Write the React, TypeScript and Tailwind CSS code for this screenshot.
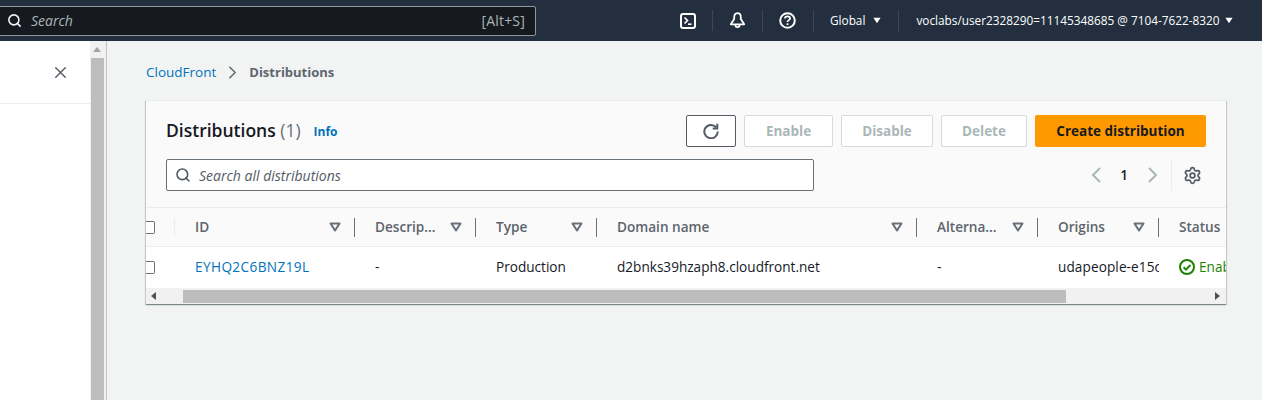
import React from "react";
import { ChevronRight, Search, Settings, X } from "lucide-react";

const font = "font-['Open_Sans','Noto_Sans',sans-serif]";

const Caret = ({ className }: { className: string }) => (
  <svg viewBox="0 0 10 8" className={className}>
    <path d="M0.5 0.5h9L5 7.5z" fill="currentColor" />
  </svg>
);

const SortIcon = () => (
  <svg viewBox="0 0 12 10" className="w-3 h-2.5 shrink-0 text-[#687078]">
    <path d="M1.5 1.5h9L6 8.5z" fill="none" stroke="currentColor" strokeWidth="2" strokeLinejoin="round" />
  </svg>
);

const TerminalIcon = () => (
  <svg viewBox="0 0 16 16" className="w-4 h-4 shrink-0" fill="none" stroke="currentColor" strokeWidth="2">
    <rect x="1" y="1" width="14" height="14" rx="2" />
    <path d="M4.5 4.5L7.5 7.5L4.5 10.5" strokeWidth="1.6" />
    <path d="M8 11.2h3.5" strokeWidth="1.6" />
  </svg>
);

const BellGlyph = () => (
  <svg viewBox="0 0 17 17" className="w-[17px] h-[17px] shrink-0" fill="none" stroke="currentColor" strokeWidth="1.8">
    <path d="M8.5 1.2C6.2 1.2 5.2 3 5.2 5v2L1.8 12.3h13.4L11.8 7V5c0-2-1-3.8-3.3-3.8z" strokeLinejoin="round" />
    <path d="M6.4 13a2.1 2.1 0 0 0 4.2 0" />
  </svg>
);

const HelpIcon = () => (
  <svg viewBox="0 0 17 17" className="w-[17px] h-[17px] shrink-0" fill="none" stroke="currentColor" strokeWidth="2">
    <circle cx="8.5" cy="8.5" r="7.3" />
    <path d="M6 6.6c0-1.5 1.1-2.3 2.5-2.3s2.5.9 2.5 2.1c0 1.7-2.5 1.8-2.5 3.6" strokeWidth="1.8" />
    <path d="M8.5 11.3v1.7" strokeWidth="1.8" />
  </svg>
);

const RefreshIcon = () => (
  <svg viewBox="0 0 16 16" className="w-4 h-4 text-[#545b64]" fill="none" stroke="currentColor" strokeWidth="2">
    <path d="M13.2 4.4A6.7 6.7 0 1 0 14.7 8.5" />
    <path d="M14.3 0.8v4.6H9.7" />
  </svg>
);

const Chevron = ({ dir }: { dir: "left" | "right" }) => (
  <svg viewBox="0 0 10 16" className="w-[10px] h-4 text-[#aab7b8]" fill="none" stroke="currentColor" strokeWidth="2">
    <path d={dir === "left" ? "M9 1L2 8l7 7" : "M1 1l7 7-7 7"} />
  </svg>
);

const HeaderCell = ({ label, width }: { label: string; width: string }) => (
  <div className={`${width} shrink-0 h-full flex items-center pl-5`}>
    <span className="flex-1 whitespace-nowrap text-[#5d646c] text-[13.6px] font-semibold">{label}</span>
    <span className="mr-[13px]">
      <SortIcon />
    </span>
    <span className="w-px h-[19px] bg-[#687078]" />
  </div>
);

const Cell = ({ width, children }: { width: string; children: React.ReactNode }) => (
  <div className={`${width} shrink-0 pl-5 whitespace-nowrap overflow-hidden text-[13.6px] text-[#16191f]`}>{children}</div>
);

const NavDivider = () => <span className="block w-px h-[21px] bg-[#414750]" />;

const ToolbarButton = ({ label, width }: { label: string; width: string }) => (
  <button className={`${width} h-8 border border-[#d5dbdb] rounded-[2px] bg-white text-[#aab7b8] text-[13.5px] font-bold`}>{label}</button>
);

export default function App() {
  return (
    <div className={`${font} w-[1262px] h-[400px] overflow-hidden flex flex-col bg-[#f2f3f3]`}>
      {/* Top nav */}
      <header className="h-[41px] shrink-0 bg-[#232f3e] flex items-center text-white">
        <div className="w-[544px] -ml-2 h-[30px] shrink-0 border border-[#8d9a9b] rounded-[2px] bg-[#16191f] flex items-center pl-[14px] pr-[10px] text-[14px]">
          <Search size={15} strokeWidth={2.5} className="text-[#f2f3f3]" />
          <span className="ml-[9px] italic text-[#aab7b8]">Search</span>
          <span className="ml-auto text-[#aab7b8] text-[14px] tracking-[0.2px]">[Alt+S]</span>
        </div>
        <div className="ml-[144px] flex items-center gap-4">
          <TerminalIcon />
          <NavDivider />
          <BellGlyph />
          <NavDivider />
          <HelpIcon />
          <span className="ml-px"><NavDivider /></span>
        </div>
        <div className="ml-[16px] flex items-center text-[11.8px] font-medium">
          <span>Global</span>
          <Caret className="w-2 h-[7px] ml-[8px]" />
          <span className="ml-[17px] mr-[17px]"><NavDivider /></span>
          <span className="whitespace-nowrap">voclabs/user2328290=11145348685 @ 7104-7622-8320</span>
          <Caret className="w-2 h-[7px] ml-[6px]" />
        </div>
      </header>

      <div className="flex-1 flex min-h-0">
        {/* Side panel */}
        <aside className="w-[90px] shrink-0 bg-white">
          <div className="h-[63px] border-b border-[#eaeded] flex items-center justify-end pr-[20px]">
            <X size={19} strokeWidth={1.8} className="text-[#545b64]" />
          </div>
        </aside>
        <div className="w-[17px] shrink-0 bg-[#f1f1f1] border-r border-[#bfc5c5] flex flex-col">
          <svg viewBox="0 0 8 5" className="w-2 h-[5px] mt-[6px] ml-[3px] text-[#a3a3a3]">
            <path d="M4 0l4 5H0z" fill="currentColor" />
          </svg>
          <div className="w-[13px] flex-1 mt-[6px] ml-px bg-[#bdbdbd]" />
        </div>

        {/* Main */}
        <main className="flex-1 min-w-0 pl-[39px] pr-[36px]">
          <nav className="h-[59px] flex items-center pt-1 whitespace-nowrap">
            <span className="text-[#0073bb] text-[13.5px]">CloudFront</span>
            <ChevronRight size={21} strokeWidth={2} className="ml-[6px] mr-[6px] text-[#687078]" />
            <span className="text-[#5f666e] text-[13px] font-bold">Distributions</span>
          </nav>

          <section className="bg-[#fafafa] border-t border-[#eaeded] shadow-[0_1px_1px_0_rgba(0,28,36,0.3),1px_1px_1px_0_rgba(0,28,36,0.15),-1px_1px_1px_0_rgba(0,28,36,0.15)]">
            <div className="h-[107px] pl-5 pr-5 pt-[14px] border-b border-[#eaeded]">
              <div className="flex items-center h-8">
                <h1 className="text-[17.5px] font-semibold text-[#16191f] pb-[2px]">
                  Distributions <span className="font-normal text-[#687078]">(1)</span>
                </h1>
                <a className="ml-[13px] text-[12px] font-bold text-[#0073bb] pt-px">Info</a>
                <div className="ml-auto flex items-center gap-2">
                  <button className="w-[50px] h-8 border border-[#545b64] rounded-[2px] bg-white flex items-center justify-center">
                    <RefreshIcon />
                  </button>
                  <ToolbarButton label="Enable" width="w-[89px]" />
                  <ToolbarButton label="Disable" width="w-[92px]" />
                  <ToolbarButton label="Delete" width="w-[86px]" />
                  <button className="w-[171px] h-8 rounded-[2px] bg-[#ff9900] text-[#16191f] text-[13.5px] font-bold">Create distribution</button>
                </div>
              </div>
              <div className="flex items-center mt-3">
                <div className="w-[648px] h-8 border border-[#687078] rounded-[2px] bg-white flex items-center pl-2">
                  <Search size={16} strokeWidth={2.4} className="text-[#545b64]" />
                  <span className="ml-2 italic text-[14px] text-[#545b64]">Search all distributions</span>
                </div>
                <div className="ml-auto flex items-center mr-[4px]">
                  <Chevron dir="left" />
                  <span className="ml-[19px] mr-[20px] text-[13.5px] font-semibold text-[#16191f]">1</span>
                  <Chevron dir="right" />
                  <span className="w-px h-8 bg-[#eaeded] ml-[13px] mr-[11px]" />
                  <Settings size={19} strokeWidth={2.2} className="text-[#545b64]" />
                </div>
              </div>
            </div>

            {/* Table */}
            <div className="overflow-hidden">
              <div className="h-[39px] flex items-center w-[1300px] border-b border-[#eaeded] bg-[#fafafa]">
                <div className="w-[29px] shrink-0 h-full flex items-center relative">
                  <span className="block w-[9px] h-[13px] border border-l-0 border-[#687078] rounded-r-[2px] bg-white" />
                  <span className="absolute right-0 top-[10px] w-px h-[19px] bg-[#eaeded]" />
                </div>
                <HeaderCell label="ID" width="w-[180px]" />
                <HeaderCell label="Descrip..." width="w-[121px]" />
                <HeaderCell label="Type" width="w-[121px]" />
                <HeaderCell label="Domain name" width="w-[320px]" />
                <HeaderCell label="Alterna..." width="w-[121px]" />
                <HeaderCell label="Origins" width="w-[121px]" />
                <HeaderCell label="Status" width="w-[121px]" />
              </div>
              <div className="h-[41px] flex items-center w-[1300px] bg-white">
                <div className="w-[29px] shrink-0">
                  <span className="block w-[9px] h-[13px] border border-l-0 border-[#687078] rounded-r-[2px] bg-white" />
                </div>
                <Cell width="w-[180px]"><span className="text-[#0073bb] tracking-[0.4px]">EYHQ2C6BNZ19L</span></Cell>
                <Cell width="w-[121px]">-</Cell>
                <Cell width="w-[121px]">Production</Cell>
                <Cell width="w-[320px]">d2bnks39hzaph8.cloudfront.net</Cell>
                <Cell width="w-[121px]">-</Cell>
                <Cell width="w-[121px]"><span className="tracking-[0.1px]">udapeople-e15c0123</span></Cell>
                <Cell width="w-[121px]">
                  <span className="flex items-center text-[#1d8102]">
                    <svg viewBox="0 0 16 16" className="w-4 h-4 mr-1">
                      <circle cx="8" cy="8" r="7" fill="none" stroke="currentColor" strokeWidth="2" />
                      <path d="M4.6 8.2l2.4 2.4 4.4-4.6" fill="none" stroke="currentColor" strokeWidth="2" />
                    </svg>
                    Enabled
                  </span>
                </Cell>
              </div>
              {/* Scrollbar */}
              <div className="h-[16px] bg-[#f1f1f1] flex items-center">
                <svg viewBox="0 0 5 8" className="w-[5px] h-2 ml-[5px] text-[#505050]">
                  <path d="M5 0v8L0 4z" fill="currentColor" />
                </svg>
                <div className="w-[883px] h-[13px] ml-[27px] bg-[#bdbdbd]" />
                <svg viewBox="0 0 5 8" className="w-[5px] h-2 ml-auto mr-[6px] text-[#505050]">
                  <path d="M0 0v8l5-4z" fill="currentColor" />
                </svg>
              </div>
            </div>
          </section>
        </main>
      </div>
    </div>
  );
}
